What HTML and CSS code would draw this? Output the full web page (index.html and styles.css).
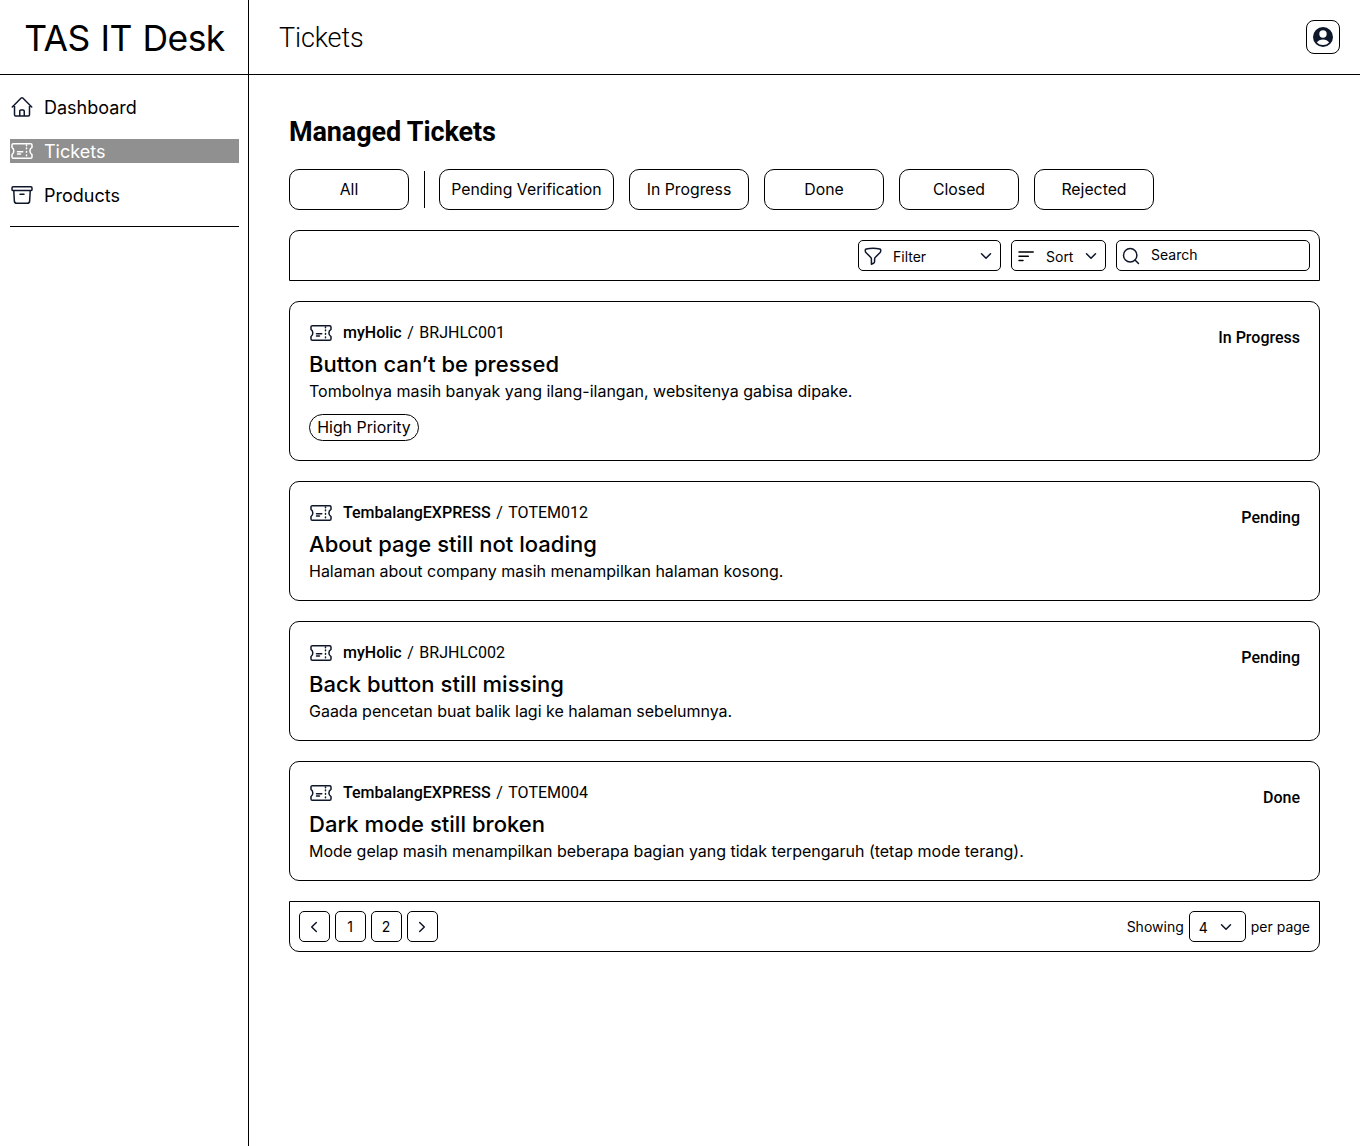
FILE: index.html
```html
<!DOCTYPE html>
<html lang="en">
<head>
<meta charset="utf-8">
<title>TAS IT Desk</title>
<link rel="stylesheet" href="styles.css">
</head>
<body>
<svg class="sprite" aria-hidden="true">
  <symbol id="ticket" viewBox="0 0 24 24">
    <path d="M3.3 4.7h17.4a1.3 1.3 0 0 1 1.3 1.3v2.4c-1.400.9-2.100 2-2.100 3.600s.7 2.700 2.100 3.600V18a1.300 1.300 0 0 1-1.300 1.300H3.300A1.300 1.300 0 0 1 2 18v-2.400c1.200-.9 1.800-2 1.800-3.600S3.200 9.300 2 8.400V6a1.300 1.300 0 0 1 1.300-1.300Z"/>
    <path d="M16.500 6v.75M16.500 9v.75M16.500 12.500v.75M16.500 16v.75M7.500 12.750h5.250M7.500 15h3"/>
  </symbol>
  <symbol id="chevron" viewBox="0 0 12 12"><path d="m1.500 3.700 4.500 4.600 4.500-4.600"/></symbol>
</svg>
<div class="app">
  <aside class="sidebar">
    <div class="brand"><span>TAS IT Desk</span></div>
    <nav class="nav">
      <a class="nav-item"><svg class="icon" viewBox="0 0 24 24"><path d="m2.250 12 8.950-8.950a1.120 1.120 0 0 1 1.600 0L21.750 12M4.500 9.750v10.120c0 .62.500 1.130 1.120 1.130H9.750v-4.870c0-.62.500-1.130 1.120-1.130h2.260c.62 0 1.120.5 1.120 1.130V21h4.130c.62 0 1.120-.5 1.120-1.130V9.750M8.250 21h8.250"/></svg><span>Dashboard</span></a>
      <a class="nav-item active"><svg class="icon"><use href="#ticket"/></svg><span>Tickets</span></a>
      <a class="nav-item"><svg class="icon" viewBox="0 0 24 24"><path d="m20.250 7.500-.62 10.630a2.250 2.250 0 0 1-2.250 2.120H6.620a2.250 2.250 0 0 1-2.250-2.120L3.750 7.500M10 11.250h4M3.120 7.500h17.760c.62 0 1.120-.5 1.120-1.120v-1.500c0-.62-.5-1.130-1.120-1.130H3.120C2.500 3.750 2 4.250 2 4.880v1.500c0 .62.500 1.120 1.120 1.120Z"/></svg><span>Products</span></a>
    </nav>
  </aside>
  <div class="content">
    <header class="topbar">
      <span>Tickets</span>
      <button class="avatar"><svg viewBox="0 0 20 20"><circle cx="10" cy="10" r="10"/><circle class="cut" cx="10" cy="7" r="3.700"/><path class="cut" d="M3.900 15.400c1.200-2 3.500-3 6.100-3s4.900 1 6.100 3A7.900 7.900 0 0 1 10 18a7.900 7.900 0 0 1-6.100-2.600Z"/></svg></button>
    </header>
    <main class="main">
      <h1>Managed Tickets</h1>
      <div class="pills">
        <button class="pill">All</button>
        <i class="bar"></i>
        <button class="pill wide">Pending Verification</button>
        <button class="pill">In Progress</button>
        <button class="pill">Done</button>
        <button class="pill">Closed</button>
        <button class="pill">Rejected</button>
      </div>
      <div class="tools">
        <button class="control filter"><svg class="small" viewBox="0 0 18 18"><path d="M9 1.300c2.300 0 4.500.2 6.700.6.600.1 1 .6 1 1.100v.9c0 .7-.3 1.300-.8 1.800l-4.500 4.500c-.5.500-.8 1.100-.8 1.800v2.400c0 .8-.5 1.500-1.200 1.900l-2 .9V12c0-.7-.3-1.300-.8-1.800L2.100 5.700c-.5-.5-.8-1.100-.8-1.800V3c0-.5.400-1 1-1.100 2.200-.4 4.400-.6 6.700-.6Z"/></svg><span>Filter</span><svg class="chev"><use href="#chevron"/></svg></button>
        <button class="control sort"><svg class="small lines" viewBox="0 0 18 18"><path d="M2 5h14.200M2 9.200h9.300M2 13.400h4"/></svg><span>Sort</span><svg class="chev"><use href="#chevron"/></svg></button>
        <label class="control search"><svg class="small" viewBox="0 0 18 18"><circle cx="8.200" cy="8.200" r="6.700"/><path d="m13 13 3.500 3.500"/></svg><span>Search</span></label>
      </div>
      <article class="card tall">
        <div class="info">
          <div class="source"><svg class="icon"><use href="#ticket"/></svg><b>myHolic</b><span class="slash">/</span><span>BRJHLC001</span></div>
          <h2>Button can’t be pressed</h2>
          <p>Tombolnya masih banyak yang ilang-ilangan, websitenya gabisa dipake.</p>
          <span class="tag">High Priority</span>
        </div>
        <strong class="status">In Progress</strong>
      </article>
      <article class="card">
        <div class="info">
          <div class="source"><svg class="icon"><use href="#ticket"/></svg><b>TembalangEXPRESS</b><span class="slash">/</span><span>TOTEM012</span></div>
          <h2>About page still not loading</h2>
          <p>Halaman about company masih menampilkan halaman kosong.</p>
        </div>
        <strong class="status">Pending</strong>
      </article>
      <article class="card">
        <div class="info">
          <div class="source"><svg class="icon"><use href="#ticket"/></svg><b>myHolic</b><span class="slash">/</span><span>BRJHLC002</span></div>
          <h2>Back button still missing</h2>
          <p>Gaada pencetan buat balik lagi ke halaman sebelumnya.</p>
        </div>
        <strong class="status">Pending</strong>
      </article>
      <article class="card">
        <div class="info">
          <div class="source"><svg class="icon"><use href="#ticket"/></svg><b>TembalangEXPRESS</b><span class="slash">/</span><span>TOTEM004</span></div>
          <h2>Dark mode still broken</h2>
          <p>Mode gelap masih menampilkan beberapa bagian yang tidak terpengaruh (tetap mode terang).</p>
        </div>
        <strong class="status">Done</strong>
      </article>
      <footer class="pager">
        <div class="pages">
          <button class="page"><svg class="chev prev"><use href="#chevron"/></svg></button>
          <button class="page">1</button>
          <button class="page">2</button>
          <button class="page"><svg class="chev next"><use href="#chevron"/></svg></button>
        </div>
        <div class="per-page"><span>Showing</span><button class="control count"><span>4</span><svg class="chev"><use href="#chevron"/></svg></button><span>per page</span></div>
      </footer>
    </main>
  </div>
</div>
</body>
</html>
```
FILE: styles.css
```css
* { box-sizing: border-box; }
body { margin: 0; background: #fff; color: #000; font-family: Inter, sans-serif; }
button { font: inherit; color: inherit; background: none; padding: 0; margin: 0; }
h1, h2, p { margin: 0; }
.sprite { display: none; }
svg { flex: none; fill: none; stroke: #0f172a; stroke-width: 1.5; stroke-linecap: round; stroke-linejoin: round; }

.app { display: flex; width: 1360px; height: 1146px; }
.sidebar { width: 249px; border-right: 1px solid #000; }
.brand { height: 75px; border-bottom: 1px solid #000; display: flex; justify-content: center; align-items: center; padding: 2px 0 0 1px; font-size: 35.5px; letter-spacing: -0.62px; word-spacing: 1.5px; white-space: nowrap; }
.nav { margin: 0 9px 0 10px; padding-top: 20px; display: flex; flex-direction: column; gap: 20px; height: 152px; border-bottom: 1px solid #000; }
.nav-item { height: 24px; display: flex; align-items: center; gap: 10px; font-size: 18px; }
.icon { width: 24px; height: 24px; }
.active { background: #909090; color: #fff; }
.active .icon { stroke: #fff; }

.content { flex: 1; }
.topbar { height: 75px; border-bottom: 1px solid #000; display: flex; justify-content: space-between; align-items: center; padding: 0 20px 0 30px; font: 300 27px/32px Roboto, sans-serif; letter-spacing: -0.13px; }
.topbar span { padding-top: 2px; }
.avatar { width: 34px; height: 34px; border: 1px solid #000; border-radius: 8px; display: flex; align-items: center; justify-content: center; }
.avatar svg { width: 20px; height: 20px; fill: #0f172a; stroke: none; }
.avatar .cut { fill: #fff; }

.main { padding: 40px 40px 0; display: flex; flex-direction: column; gap: 20px; }
h1 { height: 34px; font: 700 27px/34px Roboto, sans-serif; letter-spacing: -0.13px; }
.pills { display: flex; align-items: center; gap: 15px; }
.pill { width: 120px; height: 41px; border: 1px solid #000; border-radius: 10px; font-size: 15.8px; white-space: nowrap; }
.wide { width: 175px; }
.bar { width: 1px; height: 37px; background: #000; margin-right: -1px; }

.tools { height: 51px; border: 1px solid #000; border-radius: 10px 10px 0 0; display: flex; justify-content: flex-end; align-items: center; gap: 10px; padding: 0 9px; }
.control { height: 31px; border: 1px solid #000; border-radius: 5px; display: flex; align-items: center; font-size: 14px; }
.control span { padding-top: 1px; }
.small { width: 18px; height: 18px; margin-right: 11px; }
.chev { width: 12px; height: 12px; margin-left: auto; }
.filter { width: 143px; padding: 0 8px 0 5px; }
.sort { width: 95px; padding: 0 8px 0 5px; }
.lines { stroke: #000; }
.search { width: 194px; padding: 0 5px; }
.search span { padding: 0 0 2px; }

.card { height: 120px; border: 1px solid #000; border-radius: 10px; padding: 19px; display: flex; justify-content: space-between; }
.tall { height: 160px; }
.source { height: 24px; display: flex; align-items: center; font: 400 16px/24px Roboto, sans-serif; }
.source .icon { margin-right: 10px; }
.source b { font-weight: 500; }
.slash { margin: 0 5.500px; }
h2 { font: 500 22px/32px Inter, sans-serif; padding-top: 3px; height: 34px; letter-spacing: 0.03px; }
p { font-size: 16px; line-height: 24px; height: 25px; letter-spacing: -0.015px; }
.tag { display: flex; align-items: center; justify-content: center; width: 110px; height: 27px; padding-bottom: 1px; margin-top: 10px; border: 1px solid #000; border-radius: 14px; font-size: 15.900px; white-space: nowrap; }
.status { font: 500 16px/24px Roboto, sans-serif; padding-top: 5px; }

.pager { height: 51px; border: 1px solid #000; border-radius: 0 0 10px 10px; display: flex; justify-content: space-between; align-items: center; padding: 0 9px; font-size: 14px; }
.pages, .per-page { display: flex; align-items: center; gap: 5px; }
.page { width: 31px; height: 31px; border: 1px solid #000; border-radius: 5px; display: flex; align-items: center; justify-content: center; padding-right: 1px; }
.page .chev { margin: 0; }
.prev { transform: rotate(90deg); }
.next { transform: rotate(-90deg); }
.count { width: 57px; padding: 0 13px 0 9px; }
```
